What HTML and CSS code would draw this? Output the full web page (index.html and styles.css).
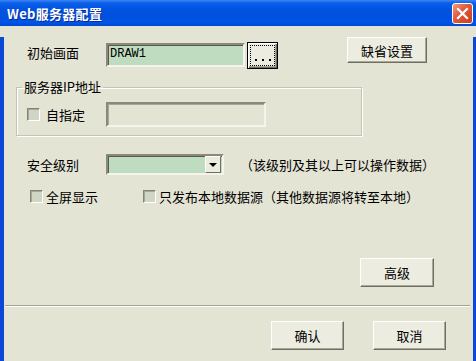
FILE: index.html
```html
<!DOCTYPE html>
<html lang="zh-CN">
<head>
    <meta charset="UTF-8">
    <title>Web服务器配置</title>
    <link rel="stylesheet" href="styles.css">
</head>
<body>

<div class="window">
    <div class="titlebar">
        <span class="title">Web服务器配置</span>
        <span class="close">
            <svg width="13" height="13" viewBox="0 0 13 13">
                <path d="M2 2 L11 11 M11 2 L2 11" stroke="#fff" stroke-width="2.2" stroke-linecap="square"/>
            </svg>
        </span>
    </div>

    <div class="frame">
        <div class="row row-top">
            <span class="label">初始画面</span>
            <span class="field field-draw">DRAW1</span>
            <button class="btn btn-browse" title="..."><span class="focus"><i class="dot"></i><i class="dot"></i><i class="dot"></i></span></button>
            <button class="btn btn-defaults">缺省设置</button>
        </div>

        <fieldset class="group">
            <legend>服务器IP地址</legend>
            <label class="check check-ip"><span class="box"></span>自指定</label>
            <span class="field field-ip"></span>
        </fieldset>

        <div class="row row-level">
            <span class="label">安全级别</span>
            <span class="field combo"><span class="arrow"></span></span>
            <span class="hint">（该级别及其以上可以操作数据）</span>
        </div>

        <div class="row row-checks">
            <label class="check check-full"><span class="box"></span>全屏显示</label>
            <label class="check"><span class="box"></span>只发布本地数据源（其他数据源将转至本地）</label>
        </div>

        <div class="row row-advanced">
            <button class="btn btn-advanced">高级</button>
        </div>

        <div class="separator"></div>

        <div class="row row-actions">
            <button class="btn btn-action">确认</button>
            <button class="btn btn-action">取消</button>
        </div>
    </div>
</div>

</body>
</html>
```

FILE: styles.css
```css
body {
    margin: 0;
    font-family: "Noto Sans CJK SC", "Liberation Sans", sans-serif;
    font-size: 13px;
    color: #000;
    background-color: #e4e4d4;
}
.window {
    width: 476px;
    height: 361px;
    overflow: hidden;
}
.titlebar {
    height: 26px;
    display: flex;
    align-items: center;
    justify-content: space-between;
    padding: 0 3px 0 7px;
    box-sizing: border-box;
    background: linear-gradient(to bottom, #3d87f5 0, #0b5fe8 3px, #0055e3 8px, #0050dc 17px, #0056e8 22px, #0049d0 26px);
}
.title {
    color: #fff;
    font-weight: bold;
    font-size: 13px;
    letter-spacing: 0.3px;
    text-shadow: 1px 1px 0 #0a2a9a;
}
.close {
    width: 19px;
    height: 19px;
    display: flex;
    align-items: center;
    justify-content: center;
    border: 1px solid #fff;
    border-radius: 3px;
    background: linear-gradient(135deg, #f09a7e 0%, #e0573a 45%, #c63e1d 100%);
}
.frame {
    height: 335px;
    border-left: 4px solid #0a48d6;
    border-right: 3px solid #0a48d6;
    background-color: #e4e4d4;
}
.row {
    display: flex;
}
.label {
    width: 79px;
    line-height: 16px;
    flex-shrink: 0;
}
.field {
    box-sizing: border-box;
    border: 2px solid;
    border-color: #8a8a7c #f4f4ec #f4f4ec #8a8a7c;
    box-shadow: inset 1px 1px 0 #5a5a50;
    background-color: #c0dcc0;
}
.btn {
    box-sizing: border-box;
    padding: 0;
    font-family: inherit;
    font-size: 13px;
    color: #000;
    background-color: #ecece0;
    border: 1px solid;
    border-color: #fff #6e6e62 #6e6e62 #fff;
    box-shadow: inset -1px -1px 0 #a8a898;
}

.row-top {
    margin-top: 11px;
    padding-left: 23px;
    align-items: flex-start;
}
.row-top .label {
    margin-top: 8px;
}
.field-draw {
    width: 139px;
    height: 24px;
    margin-top: 6px;
    padding-left: 2px;
    font-family: "Liberation Mono", monospace;
    font-size: 12px;
    line-height: 18px;
}
.btn-browse {
    width: 31px;
    height: 27px;
    margin-top: 5px;
    margin-left: 2px;
    border: 1px solid #000;
    box-shadow: inset 1px 1px 0 #fff, inset -1px -1px 0 #6e6e62, inset -2px -2px 0 #a8a898;
    display: flex;
    align-items: center;
    justify-content: center;
}
.focus {
    width: 25px;
    height: 21px;
    padding-bottom: 4px;
    border: 1px dotted #000;
    box-sizing: border-box;
    display: flex;
    align-items: flex-end;
    justify-content: center;
    gap: 5px;
}
.dot {
    width: 2px;
    height: 2px;
    background-color: #000;
}
.btn-defaults {
    width: 80px;
    height: 26px;
    margin-left: 69px;
}

.group {
    width: 346px;
    margin: 10px 0 0 12px;
    padding: 7px 0 8px 10px;
    box-sizing: border-box;
    border: 1px solid #c4c4b4;
    box-shadow: 1px 1px 0 #fff, inset 1px 1px 0 #fff;
    display: flex;
    align-items: center;
}
.group legend {
    margin-left: -5px;
    padding: 0 2px;
    line-height: 16px;
}
.check {
    display: flex;
    align-items: center;
    line-height: 16px;
}
.box {
    width: 13px;
    height: 13px;
    margin-right: 3px;
    box-sizing: border-box;
    border: 1px solid;
    border-color: #84847a #fff #fff #84847a;
    box-shadow: inset 1px 1px 0 #a4a898;
    background-color: #cfd6c4;
}
.check-ip {
    width: 79px;
}
.check-ip .box {
    margin-right: 6px;
}
.field-ip {
    width: 160px;
    height: 25px;
    background-color: #e4e4d4;
    box-shadow: inset 1px 1px 0 #a8a898;
}

.row-level {
    margin-top: 18px;
    padding-left: 23px;
    align-items: center;
}
.combo {
    width: 118px;
    height: 21px;
    display: flex;
    justify-content: flex-end;
    padding-right: 1px;
}
.arrow {
    width: 16px;
    height: 17px;
    box-sizing: border-box;
    background-color: #ecece0;
    border: 1px solid;
    border-color: #fff #6e6e62 #6e6e62 #fff;
    position: relative;
}
.arrow::after {
    content: "";
    position: absolute;
    left: 3px;
    top: 6px;
    border-left: 4px solid transparent;
    border-right: 4px solid transparent;
    border-top: 4px solid #000;
}
.hint {
    margin-left: 16px;
    line-height: 16px;
}

.row-checks {
    margin-top: 15px;
    padding-left: 26px;
    height: 13px;
    align-items: center;
}
.check-full {
    width: 113px;
}

.row-advanced {
    margin-top: 55px;
    padding-left: 356px;
}
.btn-advanced {
    width: 74px;
    height: 29px;
}

.separator {
    margin: 18px 3px 0 1px;
    height: 1px;
    background-color: #a4a494;
    border-bottom: 1px solid #fff;
}

.row-actions {
    margin-top: 14px;
    padding-left: 267px;
    gap: 29px;
}
.btn-action {
    width: 73px;
    height: 29px;
}
```
